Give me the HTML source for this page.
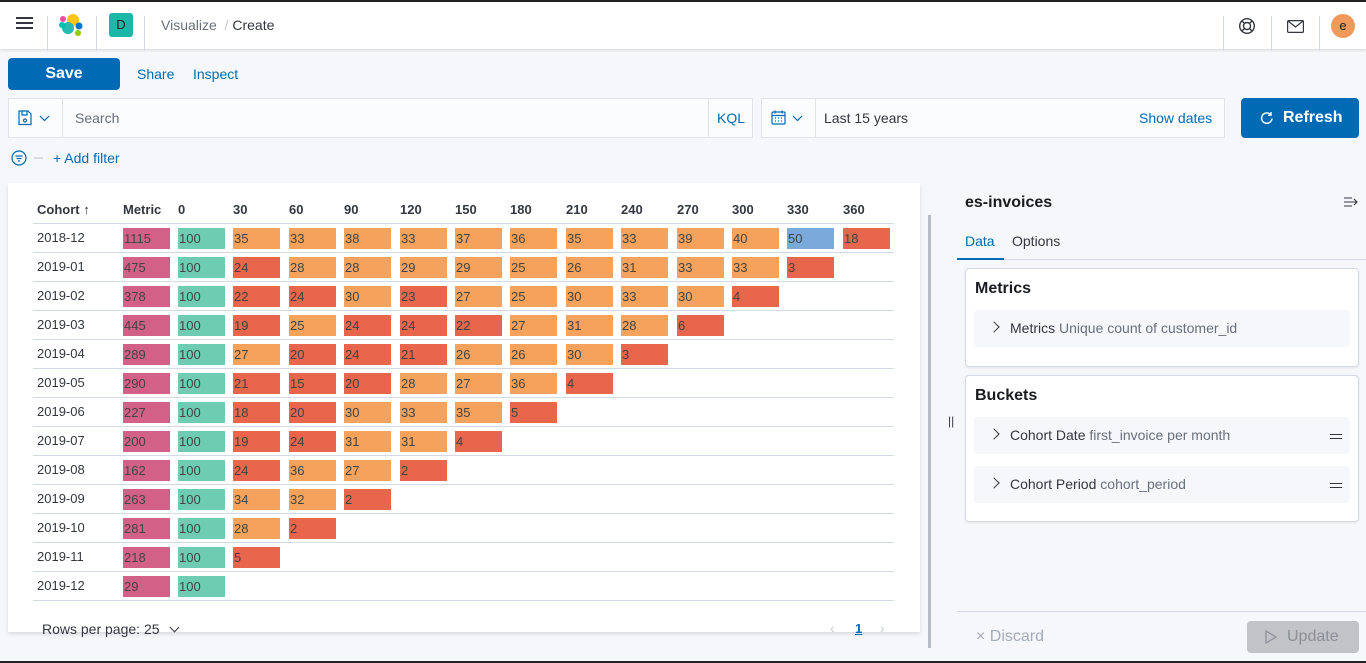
<!DOCTYPE html>
<html><head><meta charset="utf-8"><style>
*{box-sizing:border-box;margin:0;padding:0}
body{width:1366px;height:663px;overflow:hidden;background:#f5f7fa;font-family:"Liberation Sans",sans-serif;color:#343741;position:relative;font-size:14px}
.a{position:absolute}
.hdr{left:0;top:0;width:1366px;height:49px;background:#fff;border-top:2px solid #222;box-shadow:0 1px 3px rgba(0,0,0,.15)}
.vl{position:absolute;top:14px;width:1px;height:35px;background:#d3dae6}
.blue{color:#006bb4}
.cell{position:absolute;width:47px;height:21px;font-size:13px;line-height:21px;padding-left:1px;color:#444}
.hl{position:absolute;left:33px;width:861px;height:1px;background:#d3dae6}
.card{position:absolute;left:965px;width:394px;background:#fff;border:1px solid #d3dae6;border-radius:4px;box-shadow:0 1px 2px rgba(0,0,0,.08)}
.item{position:absolute;left:8px;width:376px;background:#f5f7fa;border-radius:4px;height:37px;font-size:14px;line-height:37px;padding-left:36px}
.item .c{color:#69707d}
.chev{position:absolute;left:16px;top:13px;width:8px;height:8px;border-right:1.5px solid #343741;border-top:1.5px solid #343741;transform:rotate(45deg)}
.eq{position:absolute;right:8px;top:17px;width:12px;height:5px;border-top:1.5px solid #343741;border-bottom:1.5px solid #343741}
</style></head><body>
<div class="a hdr">
  <div class="a" style="left:16px;top:15px;width:17px;height:2px;background:#343741;box-shadow:0 5px 0 #343741,0 10px 0 #343741"></div>
  <div class="vl" style="left:47px"></div>
  <svg class="a" style="left:58px;top:10px" width="26" height="26" viewBox="0 0 26 26"><circle cx="15" cy="8" r="6" fill="#fec514"/><circle cx="10" cy="16" r="6" fill="#24bbb1"/><circle cx="5" cy="7" r="3" fill="#f04e98"/><circle cx="21" cy="14" r="3.5" fill="#07c"/><circle cx="20" cy="21" r="3" fill="#93c90e"/><circle cx="4" cy="13" r="3" fill="#00bfb3"/></svg>
  <div class="vl" style="left:96px"></div>
  <div class="a" style="left:109px;top:11px;width:24px;height:24px;background:#1bb8a8;border-radius:3px;font-size:13px;text-align:center;line-height:24px;color:#1a1c21">D</div>
  <div class="vl" style="left:144px"></div>
  <div class="a" style="left:161px;top:15px;font-size:14px;color:#69707d">Visualize <span style="color:#c5cad3">&nbsp;/&nbsp;</span><span style="color:#343741">Create</span></div>
  <div class="vl" style="left:1223px"></div>
  <svg class="a" style="left:1238px;top:15px" width="18" height="18" viewBox="0 0 18 18" fill="none" stroke="#343741" stroke-width="1.4"><circle cx="9" cy="9" r="7.3"/><circle cx="9" cy="9" r="3.5"/><path d="M4 4l2.5 2.5M14 4l-2.5 2.5M4 14l2.5-2.5M14 14l-2.5-2.5"/></svg>
  <div class="vl" style="left:1271px"></div>
  <svg class="a" style="left:1287px;top:18px" width="17" height="13" viewBox="0 0 17 13" fill="none" stroke="#343741" stroke-width="1.2"><rect x=".6" y=".6" width="15.8" height="11.8" rx="1"/><path d="M1 1l7.5 6L16 1"/></svg>
  <div class="vl" style="left:1319px"></div>
  <div class="a" style="left:1331px;top:12px;width:24px;height:24px;border-radius:50%;background:#f1995a;text-align:center;line-height:23px;font-size:13px;color:#222">e</div>
</div>
<div class="a" style="left:8px;top:58px;width:112px;height:32px;background:#006bb4;border-radius:4px;color:#fff;font-size:16px;font-weight:bold;text-align:center;line-height:32px">Save</div>
<div class="a blue" style="left:137px;top:66px">Share</div>
<div class="a blue" style="left:193px;top:66px">Inspect</div>
<div class="a" style="left:8px;top:98px;width:745px;height:40px;background:#fbfcfd;border:1px solid #dfe3ea"></div>
<div class="a" style="left:62px;top:99px;width:1px;height:38px;background:#dfe3ea"></div>
<div class="a" style="left:708px;top:99px;width:1px;height:38px;background:#dfe3ea"></div>
<svg class="a" style="left:18px;top:110px" width="36" height="16" viewBox="0 0 36 16" fill="none" stroke="#006bb4" stroke-width="1.2"><path d="M1 1h9l3 3v10.5H1z"/><path d="M4 1v4h5V1"/><circle cx="7" cy="10.5" r="1.5"/><path d="M22 6l4.5 4.5L31 6"/></svg>
<div class="a" style="left:75px;top:110px;color:#69707d">Search</div>
<div class="a blue" style="left:717px;top:110px">KQL</div>
<div class="a" style="left:761px;top:98px;width:464px;height:40px;background:#fbfcfd;border:1px solid #dfe3ea"></div>
<div class="a" style="left:815px;top:99px;width:1px;height:38px;background:#dfe3ea"></div>
<svg class="a" style="left:771px;top:110px" width="36" height="16" viewBox="0 0 36 16" fill="none" stroke="#006bb4" stroke-width="1.2"><rect x="1" y="2" width="13" height="12" rx="1"/><path d="M1 5.5h13M4 8h1M7 8h1M10 8h1M4 11h1M7 11h1M10 11h1M4 .5v3M11 .5v3"/><path d="M22 6l4.5 4.5L31 6"/></svg>
<div class="a" style="left:824px;top:110px">Last 15 years</div>
<div class="a blue" style="left:1139px;top:110px">Show dates</div>
<div class="a" style="left:1241px;top:98px;width:118px;height:40px;background:#006bb4;border-radius:4px;color:#fff;font-size:16px;font-weight:bold;line-height:40px;padding-left:42px">Refresh</div>
<svg class="a" style="left:1260px;top:111px" width="14" height="14" viewBox="0 0 14 14" fill="none" stroke="#fff" stroke-width="1.4"><path d="M11 4A5.2 5.2 0 1 0 12 7.5M11 1v3.2H8"/></svg>
<svg class="a" style="left:11px;top:150px" width="36" height="16" viewBox="0 0 36 16" fill="none" stroke="#006bb4" stroke-width="1.2"><circle cx="8" cy="8" r="7"/><path d="M4.5 6h7M5.5 8.5h5M7 11h2"/><path d="M23 8h9" stroke="#c5cad3"/></svg>
<div class="a blue" style="left:53px;top:150px">+ Add filter</div>

<div class="a" style="left:8px;top:183px;width:912px;height:449px;background:#fff;box-shadow:0 2px 4px rgba(0,0,0,.12)"></div>
<div class="a" style="left:928px;top:215px;width:3px;height:433px;background:#b8bcc4"></div>
<div id="tbl"></div>
<div class="a" style="left:42px;top:621px;font-size:14px">Rows per page: 25 <span style="display:inline-block;width:7px;height:7px;border-right:1.4px solid #343741;border-bottom:1.4px solid #343741;transform:rotate(45deg);margin:0 0 3px 8px"></span></div>
<div class="a" style="left:830px;top:620px;color:#c5cad3">&#8249;</div>
<div class="a blue" style="left:855px;top:621px;text-decoration:underline;font-weight:bold;font-size:13px">1</div>
<div class="a" style="left:880px;top:620px;color:#c5cad3">&#8250;</div>

<div class="a" style="left:957px;top:183px;width:409px;height:480px;background:#f5f7fa"></div>
<div class="a" style="left:948px;top:414px;font-size:12px">||</div>
<div class="a" style="left:965px;top:194px;font-size:16px;font-weight:bold;color:#1a1c21">es-invoices</div>
<svg class="a" style="left:1343px;top:196px" width="16" height="12" viewBox="0 0 16 12" fill="none" stroke="#343741" stroke-width="1.1"><path d="M1 2h8M1 6h13M1 10h8M11 3l3 3-3 3"/></svg>
<div class="a blue" style="left:965px;top:233px">Data</div>
<div class="a" style="left:1012px;top:233px">Options</div>
<div class="a" style="left:957px;top:259px;width:409px;height:1px;background:#d3dae6"></div>
<div class="a" style="left:957px;top:258px;width:47px;height:2px;background:#006bb4"></div>
<div class="card" style="top:268px;height:99px">
  <div class="a" style="left:9px;top:11px;font-size:16px;font-weight:bold;color:#1a1c21">Metrics</div>
  <div class="item" style="top:41px"><span class="chev"></span>Metrics <span class="c">Unique count of customer_id</span></div>
</div>
<div class="card" style="top:375px;height:147px">
  <div class="a" style="left:9px;top:11px;font-size:16px;font-weight:bold;color:#1a1c21">Buckets</div>
  <div class="item" style="top:41px"><span class="chev"></span>Cohort Date <span class="c">first_invoice per month</span><span class="eq"></span></div>
  <div class="item" style="top:90px"><span class="chev"></span>Cohort Period <span class="c">cohort_period</span><span class="eq"></span></div>
</div>
<div class="a" style="left:957px;top:611px;width:409px;height:1px;background:#d3dae6"></div>
<div class="a" style="left:976px;top:628px;color:#a2abba;font-size:16px">× Discard</div>
<div class="a" style="left:1247px;top:621px;width:112px;height:32px;background:#c2c3c6;border-radius:4px;color:#8a8f98;font-size:16px;line-height:32px;padding-left:40px">Update</div>
<svg class="a" style="left:1265px;top:630px" width="12" height="14" viewBox="0 0 12 14" fill="none" stroke="#8a8f98" stroke-width="1.2"><path d="M1 1l10 6-10 6z"/></svg>
<div class="a" style="left:0;top:661px;width:1366px;height:2px;background:#222"></div>
<script>
var d=[["2018-12",1115,100,35,33,38,33,37,36,35,33,39,40,50,18],["2019-01",475,100,24,28,28,29,29,25,26,31,33,33,3],["2019-02",378,100,22,24,30,23,27,25,30,33,30,4],["2019-03",445,100,19,25,24,24,22,27,31,28,6],["2019-04",289,100,27,20,24,21,26,26,30,3],["2019-05",290,100,21,15,20,28,27,36,4],["2019-06",227,100,18,20,30,33,35,5],["2019-07",200,100,19,24,31,31,4],["2019-08",162,100,24,36,27,2],["2019-09",263,100,34,32,2],["2019-10",281,100,28,2],["2019-11",218,100,5],["2019-12",29,100]];
var h='<div class="a" style="left:37px;top:202px;font-size:13px;font-weight:bold">Cohort &#8593;</div><div class="a" style="left:123px;top:202px;font-size:13px;font-weight:bold">Metric</div>';
var hd=[0,30,60,90,120,150,180,210,240,270,300,330,360];
hd.forEach(function(v,i){h+='<div class="a" style="left:'+Math.round(178+55.4*i)+'px;top:202px;font-size:13px;font-weight:bold">'+v+'</div>';});
for(var r=0;r<d.length;r++){var y=223+29*r;h+='<div class="hl" style="top:'+y+'px"></div>';
h+='<div class="a" style="left:37px;top:'+(y+7)+'px;font-size:13px">'+d[r][0]+'</div>';
for(var c=1;c<d[r].length;c++){var v=d[r][c],col;if(c==1)col='#d36086';else if(c==2)col='#6dccb1';else if(v<25)col='#e7664c';else if(v<50)col='#f5a35c';else col='#79aad9';
var x=c==1?123:Math.round(178+55.4*(c-2));h+='<div class="cell" style="left:'+x+'px;top:'+(y+5)+'px;background:'+col+'">'+v+'</div>';}}
h+='<div class="hl" style="top:600px"></div>';
document.getElementById('tbl').innerHTML=h;
</script>
</body></html>
